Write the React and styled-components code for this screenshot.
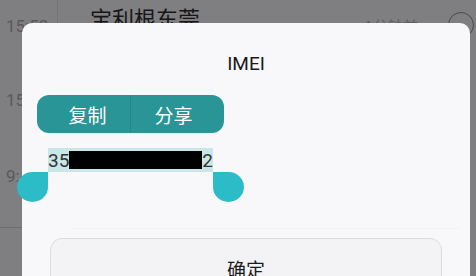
import React from 'react';
import styled, { createGlobalStyle } from 'styled-components';

const GlobalStyle = createGlobalStyle`
	html, body {
		margin: 0;
		padding: 0;
	}
	body {
		width: 476px;
		height: 276px;
		overflow: hidden;
		background: #7f7e81;
		font-family: 'Noto Sans CJK SC', 'Noto Sans', sans-serif;
	}
`;

const Screen = styled.div`
	position: relative;
	width: 476px;
	height: 276px;
	overflow: hidden;
	background: #7f7e81;
`;

const List = styled.div`
	display: flex;
	height: 100%;
`;

const TimeColumn = styled.div`
	width: 57px;
	border-right: 1px solid #757376;
	display: flex;
	flex-direction: column;
`;

const Time = styled.div`
	height: 76px;
	box-sizing: border-box;
	padding: ${(props) => props.top}px 0 0 6px;
	font-family: Roboto, sans-serif;
	font-size: 17px;
	color: #5a585b;
	border-bottom: ${(props) => (props.line ? '1px solid #6f6d70' : 'none')};
`;

const Main = styled.div`
	flex: 1;
	display: flex;
	justify-content: space-between;
	padding: 2px 2px 0 32px;
`;

const RowTitle = styled.div`
	font-size: 22px;
	line-height: 30px;
	color: #161616;
`;

const RowMeta = styled.div`
	display: flex;
	align-items: flex-start;
	gap: 30px;
	color: #5e5c5f;
	font-size: 15px;
	padding-top: 13px;
`;

const Circle = styled.div`
	width: 24px;
	height: 24px;
	margin-top: -3px;
	border: 1.5px solid #4a484b;
	border-radius: 50%;
`;

const Dialog = styled.div`
	position: absolute;
	left: 22px;
	top: 23px;
	width: 448px;
	height: 290px;
	box-sizing: border-box;
	background: #f8f7fa;
	border-radius: 10px;
	padding-top: 29px;
`;

const Title = styled.div`
	text-align: center;
	font-family: Roboto, 'Noto Sans', sans-serif;
	font-size: 19px;
	line-height: 24px;
	color: #1a1a1a;
`;

const Toolbar = styled.div`
	position: absolute;
	left: 15px;
	top: 72px;
	width: 187px;
	height: 38px;
	box-sizing: border-box;
	padding: 0 8px;
	display: flex;
	border-radius: 12px;
	background: #2a9597;
	overflow: hidden;
`;

const ToolButton = styled.div`
	flex: 1;
	display: flex;
	align-items: center;
	justify-content: center;
	color: #fff;
	font-size: 19px;
	& + & {
		border-left: 1px solid #258587;
	}
`;

const Selection = styled.div`
	position: absolute;
	left: 26px;
	top: 125px;
	height: 24px;
	display: flex;
	align-items: center;
	background: #c9e6e8;
	font-family: Roboto, sans-serif;
	font-size: 19px;
	color: #333;
`;

const Redacted = styled.span`
	display: inline-block;
	width: 133px;
	height: 18px;
	background: #000;
`;

const Handle = styled.div`
	position: absolute;
	top: 149px;
	left: ${(props) => props.x}px;
	width: 31px;
	height: 30px;
	background: #2bbcc8;
	border-radius: ${(props) => (props.side === 'left' ? '50% 0 50% 50%' : '0 50% 50% 50%')};
`;

const Divider = styled.div`
	position: absolute;
	left: 50px;
	right: 10px;
	top: 205px;
	height: 1px;
	background: #f3f2f5;
`;

const OkButton = styled.div`
	position: absolute;
	left: 28px;
	top: 215px;
	width: 392px;
	height: 64px;
	box-sizing: border-box;
	border: 1px solid #dcdbde;
	border-radius: 12px;
	background: #f3f2f5;
	text-align: center;
	padding-top: 16px;
	font-size: 19px;
	line-height: 28px;
	color: #1a1a1a;
`;

export default function App() {
	return (
		<>
			<GlobalStyle />
			<Screen>
				<List>
					<TimeColumn>
						<Time top={16}>15:58</Time>
						<Time top={14}>15:52</Time>
						<Time top={14} line>9:41</Time>
					</TimeColumn>
					<Main>
						<RowTitle>宝利根东莞</RowTitle>
						<RowMeta>
							<span>1分钟前</span>
							<Circle />
						</RowMeta>
					</Main>
				</List>
				<Dialog>
					<Title>IMEI</Title>
					<Toolbar>
						<ToolButton>复制</ToolButton>
						<ToolButton>分享</ToolButton>
					</Toolbar>
					<Selection>
						35<Redacted />2
					</Selection>
					<Handle side='left' x={-5} />
					<Handle side='right' x={191} />
					<Divider />
					<OkButton>确定</OkButton>
				</Dialog>
			</Screen>
		</>
	);
}
